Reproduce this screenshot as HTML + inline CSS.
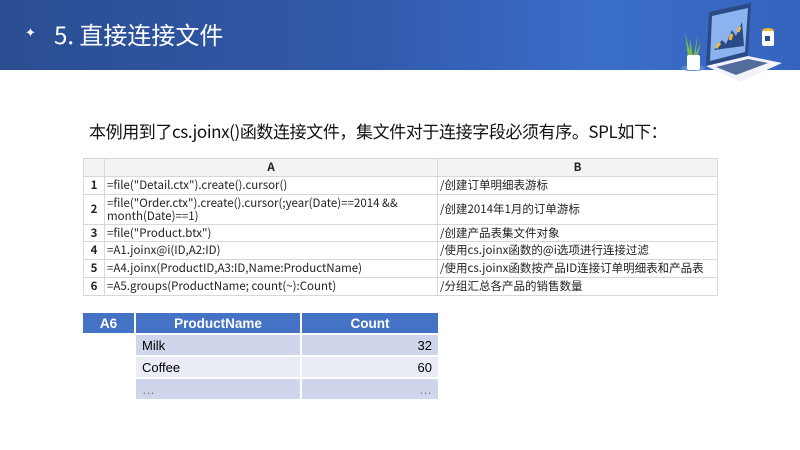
<!DOCTYPE html>
<html><head><meta charset="utf-8"><style>
*{margin:0;padding:0;box-sizing:border-box}
body{width:800px;height:450px;background:#fff;position:relative;overflow:hidden;font-family:"Liberation Sans","Noto Sans CJK SC",sans-serif}
.hdr{position:absolute;left:0;top:0;width:800px;height:70px;background:linear-gradient(90deg,#2b4e92 0%,#3259aa 45%,#3a6dca 75%,#3564bd 100%)}
.star{position:absolute;left:25px;top:25px;color:#fff;font-size:13px}
.title{position:absolute;left:54px;top:16px;color:#fff;font-size:24px;font-family:"Noto Sans CJK SC",sans-serif;font-weight:400}
.intro{position:absolute;left:89px;top:118px;font-size:17px;color:#111;font-family:"Noto Sans CJK SC",sans-serif;white-space:nowrap;letter-spacing:-0.4px}
.grid{position:absolute;left:83px;top:158px;border-collapse:collapse;font-size:11.5px;color:#222;font-family:"Noto Sans CJK SC",sans-serif}
.grid td{border:1px solid #d8d8d8;padding:0 2px;line-height:13px;vertical-align:middle;white-space:nowrap}
.grid .n{font-weight:bold;text-align:center;width:21px}
.grid .h td{background:#f3f3f3;font-weight:bold;text-align:center}
.res{position:absolute;left:83px;top:313px;border-collapse:separate;border-spacing:0;font-size:13px}
.res td{height:22px;padding:0 6px;border-right:2px solid #fff;border-bottom:2px solid #fff}
.res .hd{background:#4472c4;color:#fff;font-weight:bold;text-align:center;font-size:13.5px}
.a{background:#cfd5ea}.b{background:#e9ebf5}
.r{text-align:right}
</style></head><body>
<div class="hdr"></div>
<div class="star">✦</div>
<div class="title">5. 直接连接文件</div>
<svg style="position:absolute;left:660px;top:0" width="140" height="85" viewBox="0 0 140 85">
<ellipse cx="33" cy="68" rx="12" ry="3" fill="#5b86d8"/>
<path d="M30 38 L33 58 L29 58 Z M25 32 L31 57 L28 58 Z M38 34 L33 58 L35 58 Z M41 42 L34 58 L37 58Z" fill="#7cb84a"/>
<rect x="27" y="55" width="13" height="15" rx="2" fill="#fff"/>
<path d="M46 66 L49 12 L91 3 L88 56 Z" fill="#2c4a85"/>
<path d="M50 61 L52 16 L88 8 L85 52 Z" fill="#8ab3f0"/>
<path d="M54 50 L62 40 L66 44 L72 30 L76 36 L82 22 L84 46 Z" fill="#2c4a85"/>
<path d="M56 48 L60 43 M70 40 L72 34 M78 32 L80 27" stroke="#f0b93a" stroke-width="3"/>
<path d="M46 66 L88 56 L122 63 L80 82 Z" fill="#f1f3fb"/>
<path d="M56 67 L88 59 L108 63 L76 75 Z" fill="#2c4a85" opacity=".8"/>
<ellipse cx="108" cy="31" rx="6" ry="3" fill="#f0b93a"/>
<rect x="102" y="31" width="12" height="15" rx="2" fill="#fff"/>
<rect x="105" y="36" width="5" height="5" fill="#2c4a85"/>
</svg>
<div class="intro">本例用到了cs.joinx()函数连接文件，集文件对于连接字段必须有序。SPL如下：</div>
<table class="grid">
<tr class="h" style="height:18px"><td style="width:21px"></td><td style="width:333px">A</td><td style="width:280px">B</td></tr>
<tr style="height:18px"><td class="n">1</td><td>=file("Detail.ctx").create().cursor()</td><td>/创建订单明细表游标</td></tr>
<tr style="height:30px"><td class="n">2</td><td>=file("Order.ctx").create().cursor(;year(Date)==2014 &amp;&amp;<br>month(Date)==1)</td><td>/创建2014年1月的订单游标</td></tr>
<tr style="height:17px"><td class="n">3</td><td>=file("Product.btx")</td><td>/创建产品表集文件对象</td></tr>
<tr style="height:18px"><td class="n">4</td><td>=A1.joinx@i(ID,A2:ID)</td><td>/使用cs.joinx函数的@i选项进行连接过滤</td></tr>
<tr style="height:18px"><td class="n">5</td><td>=A4.joinx(ProductID,A3:ID,Name:ProductName)</td><td>/使用cs.joinx函数按产品ID连接订单明细表和产品表</td></tr>
<tr style="height:18px"><td class="n">6</td><td>=A5.groups(ProductName; count(~):Count)</td><td>/分组汇总各产品的销售数量</td></tr>
</table>
<table class="res">
<tr><td class="hd" style="width:53px">A6</td><td class="hd" style="width:166px">ProductName</td><td class="hd" style="width:138px">Count</td></tr>
<tr><td></td><td class="a">Milk</td><td class="a r">32</td></tr>
<tr><td></td><td class="b">Coffee</td><td class="b r">60</td></tr>
<tr><td></td><td class="a" style="color:#777">…</td><td class="a r" style="color:#777">…</td></tr>
</table>
</body></html>
